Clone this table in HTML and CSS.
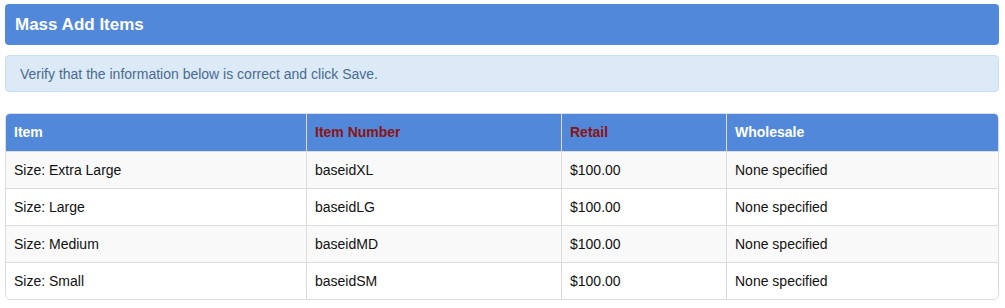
FILE: index.html
```html
<!DOCTYPE html>
<html>
<head>
<meta charset="utf-8">
<link rel="stylesheet" href="styles.css">
</head>
<body>
<div class="page">
  <div class="title-bar"><h1 class="title">Mass Add Items</h1></div>
  <div class="alert">Verify that the information below is correct and click Save.</div>
  <div class="table-wrap">
    <table class="items">
      <thead>
        <tr>
          <th class="c1">Item</th>
          <th class="c2 req">Item Number</th>
          <th class="c3 req">Retail</th>
          <th class="c4">Wholesale</th>
        </tr>
      </thead>
      <tbody>
        <tr><td>Size: Extra Large</td><td>baseidXL</td><td>$100.00</td><td>None specified</td></tr>
        <tr><td>Size: Large</td><td>baseidLG</td><td>$100.00</td><td>None specified</td></tr>
        <tr><td>Size: Medium</td><td>baseidMD</td><td>$100.00</td><td>None specified</td></tr>
        <tr><td>Size: Small</td><td>baseidSM</td><td>$100.00</td><td>None specified</td></tr>
      </tbody>
    </table>
  </div>
</div>
</body>
</html>
```

FILE: styles.css
```css
html, body {
  margin: 0;
  padding: 0;
  background: #fff;
}
body {
  font-family: "Liberation Sans", Arial, Helvetica, sans-serif;
  font-size: 14px;
  color: #111;
}
.page {
  padding: 4px 6px 0 5px;
}
.title-bar {
  background: #5288d9;
  border-radius: 4px;
  height: 41px;
  box-sizing: border-box;
  padding: 10px 10px;
  display: flex;
  align-items: center;
}
.title {
  margin: 0;
  font-size: 17px;
  font-weight: bold;
  color: #fff;
  line-height: 21px;
}
.alert {
  margin-top: 10px;
  background: #dceaf7;
  border: 1px solid #c8def0;
  border-radius: 4px;
  height: 37px;
  box-sizing: border-box;
  padding: 0 14px;
  display: flex;
  align-items: center;
  color: #4a6b91;
}
.table-wrap {
  margin-top: 21px;
  border: 1px solid #dcdcdc;
  border-radius: 5px;
  overflow: hidden;
}
.items {
  width: 100%;
  border-collapse: collapse;
  table-layout: fixed;
}
.items th, .items td {
  text-align: left;
  padding: 8px 8px;
  line-height: 20px;
  border-left: 1px solid #dcdcdc;
}
.items th:first-child, .items td:first-child {
  border-left: none;
}
.items th {
  background: #5288d9;
  color: #fff;
  font-weight: bold;
  padding: 8px 8px 9px;
  border-left-color: #e2d7c8;
}
.items th.req {
  color: #8b1414;
}
.items td {
  border-top: 1px solid #dcdcdc;
}
.items tbody tr:nth-child(odd) td {
  background: #f9f9f9;
}
.c1 { width: 284px; }
.c2 { width: 238px; }
.c3 { width: 148px; }
```
